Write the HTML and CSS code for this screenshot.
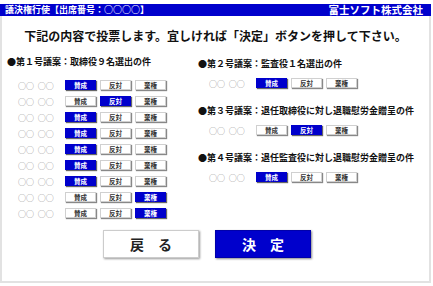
FILE: index.html
```html
<!DOCTYPE html>
<html lang="ja">
<head>
  <meta charset="UTF-8" />
  <meta name="viewport" content="width=device-width, initial-scale=1.0"/>
  <title>議決権行使</title>
  <link rel="stylesheet" href="styles.css">
</head>
<body>
  <div class="frame">
    <div class="topbar">
      <span class="topbar-left">議決権行使【出席番号：○○○○】</span>
      <span class="topbar-right">富士ソフト株式会社</span>
    </div>

    <div class="box">
      <p class="lead">下記の内容で投票します。宜しければ「決定」ボタンを押して下さい。</p>

      <div class="columns">
        <!-- 第1号議案 -->
        <div class="col col-left">
          <div class="agenda">
            <h3>●第１号議案：取締役９名選出の件</h3>
            <div class="row"><span class="name">○○ ○○</span><span class="vote on">賛成</span><span class="vote">反対</span><span class="vote">棄権</span></div>
            <div class="row"><span class="name">○○ ○○</span><span class="vote">賛成</span><span class="vote on">反対</span><span class="vote">棄権</span></div>
            <div class="row"><span class="name">○○ ○○</span><span class="vote on">賛成</span><span class="vote">反対</span><span class="vote">棄権</span></div>
            <div class="row"><span class="name">○○ ○○</span><span class="vote on">賛成</span><span class="vote">反対</span><span class="vote">棄権</span></div>
            <div class="row"><span class="name">○○ ○○</span><span class="vote on">賛成</span><span class="vote">反対</span><span class="vote">棄権</span></div>
            <div class="row"><span class="name">○○ ○○</span><span class="vote on">賛成</span><span class="vote">反対</span><span class="vote">棄権</span></div>
            <div class="row"><span class="name">○○ ○○</span><span class="vote on">賛成</span><span class="vote">反対</span><span class="vote">棄権</span></div>
            <div class="row"><span class="name">○○ ○○</span><span class="vote">賛成</span><span class="vote">反対</span><span class="vote on">棄権</span></div>
            <div class="row"><span class="name">○○ ○○</span><span class="vote">賛成</span><span class="vote">反対</span><span class="vote on">棄権</span></div>
          </div>
        </div>

        <!-- 第2〜4号議案 -->
        <div class="col col-right">
          <div class="agenda">
            <h3>●第２号議案：監査役１名選出の件</h3>
            <div class="row"><span class="name">○○ ○○</span><span class="vote on">賛成</span><span class="vote">反対</span><span class="vote">棄権</span></div>
          </div>
          <div class="agenda">
            <h3>●第３号議案：退任取締役に対し退職慰労金贈呈の件</h3>
            <div class="row"><span class="name">○○ ○○</span><span class="vote">賛成</span><span class="vote on">反対</span><span class="vote">棄権</span></div>
          </div>
          <div class="agenda">
            <h3>●第４号議案：退任監査役に対し退職慰労金贈呈の件</h3>
            <div class="row"><span class="name">○○ ○○</span><span class="vote on">賛成</span><span class="vote">反対</span><span class="vote">棄権</span></div>
          </div>
        </div>
      </div>

      <div class="actions">
        <button type="button" class="btn back">戻　る</button>
        <button type="button" class="btn submit">決　定</button>
      </div>
    </div>
  </div>
</body>
</html>
```

FILE: styles.css
```css
body {
  margin: 0;
  background: #fff;
  color: #111;
  font-family: "Noto Sans CJK JP", "Liberation Serif", serif;
}

.frame {
  width: 431px;
  margin-top: 4px;
}

.topbar {
  height: 12px;
  background: #0000cc;
  color: #fff;
  display: flex;
  justify-content: space-between;
  align-items: center;
  padding: 0 8px 0 5px;
  font-weight: bold;
}

.topbar-left {
  font-size: 9px;
  line-height: 12px;
}

.topbar-right {
  font-size: 10.5px;
  line-height: 12px;
}

.box {
  border: 2px solid #e2e2e2;
  border-top: none;
  padding: 13px 0 15px 5px;
  height: 267px;
  box-sizing: border-box;
}

.lead {
  margin: 0;
  padding-right: 5px;
  text-align: center;
  font-size: 12px;
  line-height: 14px;
  font-weight: bold;
}

.columns {
  display: grid;
  grid-template-columns: 191px 1fr;
  margin-top: 13px;
}

.agenda h3 {
  margin: 0 0 9px;
  font-size: 9px;
  line-height: 12px;
  font-weight: bold;
  white-space: nowrap;
}

.col-right {
  padding-top: 2px;
}

.col-right .agenda {
  margin-bottom: 14px;
}

.col-right .agenda h3 {
  margin-bottom: 5px;
}

.row {
  display: flex;
  align-items: center;
  height: 16px;
  padding-left: 11px;
  gap: 4px;
}

.name {
  width: 43px;
  color: #888;
  font-size: 8px;
  word-spacing: 2px;
  white-space: pre;
}

.vote {
  width: 31px;
  height: 10px;
  box-sizing: border-box;
  border: 1px solid #d0d0d0;
  background: #fff;
  box-shadow: 1px 1px 1px #888;
  font-size: 6.5px;
  line-height: 8px;
  text-align: center;
  font-weight: bold;
  color: #333;
}

.vote.on {
  background: #0000cc;
  border-color: #0000cc;
  color: #fff;
  box-shadow: 1px 1px 1px #666;
}

.actions {
  display: flex;
  gap: 16px;
  padding-left: 96px;
  margin-top: 9px;
}

.btn {
  width: 96px;
  height: 28px;
  font-family: inherit;
  font-size: 14px;
  font-weight: bold;
  padding: 0;
  cursor: pointer;
}

.btn.back {
  background: #fff;
  color: #222;
  border: 1px solid #ccc;
  box-shadow: 1px 1px 2px #999;
}

.btn.submit {
  background: #0000cc;
  color: #fff;
  border: 1px solid #0000aa;
  box-shadow: 1px 1px 2px #888;
}
```
